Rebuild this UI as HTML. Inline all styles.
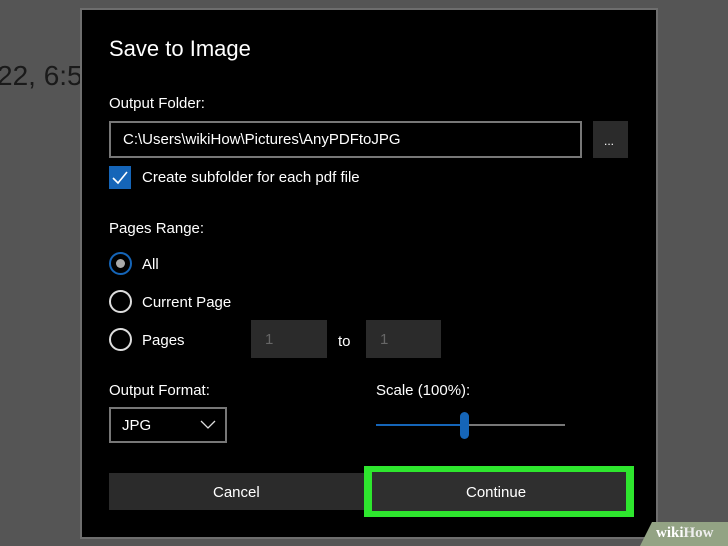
<!DOCTYPE html>
<html><head><style>
*{margin:0;padding:0;box-sizing:border-box}
body{width:728px;height:546px;background:#555;position:relative;overflow:hidden;font-family:"Liberation Sans",sans-serif;color:#fff}
.a{position:absolute}
.t{font-size:15px;color:#fff;white-space:nowrap}
.dlg{left:80px;top:8px;width:578px;height:531px;background:#000;border:2px solid #6e6e6e}
.radio{width:23px;height:23px;border:2px solid #ddd;border-radius:50%}
</style></head><body>
<div class="a" style="left:-3px;top:60px;font-size:28px;color:#1a1a1a">22, 6:5</div>
<div class="a dlg"></div>
<div class="a" style="left:109px;top:36px;font-size:22px">Save to Image</div>
<div class="a t" style="left:109px;top:95px">Output Folder:</div>
<div class="a" style="left:109px;top:121px;width:473px;height:37px;border:2px solid #777"></div>
<div class="a t" style="left:123px;top:131px">C:\Users\wikiHow\Pictures\AnyPDFtoJPG</div>
<div class="a" style="left:593px;top:121px;width:35px;height:37px;background:#2b2b2b"></div>
<div class="a t" style="left:604px;top:134px;font-size:12px">...</div>
<div class="a" style="left:109px;top:166px;width:22px;height:23px;background:#1565b8"><svg width="22" height="23"><path d="M4 12 L9 17 L18 6" stroke="#fff" stroke-width="1.6" fill="none"/></svg></div>
<div class="a t" style="left:142px;top:169px">Create subfolder for each pdf file</div>
<div class="a t" style="left:109px;top:220px">Pages Range:</div>
<div class="a radio" style="left:109px;top:252px;border-color:#1565b8"></div>
<div class="a" style="left:116px;top:259px;width:9px;height:9px;border-radius:50%;background:#aaa"></div>
<div class="a t" style="left:142px;top:256px">All</div>
<div class="a radio" style="left:109px;top:290px"></div>
<div class="a t" style="left:142px;top:294px">Current Page</div>
<div class="a radio" style="left:109px;top:328px"></div>
<div class="a t" style="left:142px;top:332px">Pages</div>
<div class="a" style="left:251px;top:320px;width:76px;height:38px;background:#2b2b2b"></div>
<div class="a t" style="left:265px;top:331px;color:#666">1</div>
<div class="a t" style="left:338px;top:333px">to</div>
<div class="a" style="left:366px;top:320px;width:75px;height:38px;background:#2b2b2b"></div>
<div class="a t" style="left:380px;top:331px;color:#666">1</div>
<div class="a t" style="left:109px;top:382px">Output Format:</div>
<div class="a" style="left:109px;top:407px;width:118px;height:36px;border:2px solid #777"></div>
<div class="a t" style="left:122px;top:417px">JPG</div>
<svg class="a" style="left:200px;top:420px" width="16" height="10"><path d="M1 1 L8 8 L15 1" stroke="#ddd" stroke-width="1.3" fill="none"/></svg>
<div class="a t" style="left:376px;top:382px">Scale (100%):</div>
<div class="a" style="left:376px;top:424px;width:90px;height:2px;background:#1565b8"></div>
<div class="a" style="left:466px;top:424px;width:99px;height:2px;background:#777"></div>
<div class="a" style="left:460px;top:412px;width:9px;height:27px;border-radius:5px;background:#1565b8"></div>
<div class="a" style="left:109px;top:473px;width:256px;height:37px;background:#2b2b2b"></div>
<div class="a t" style="left:213px;top:484px">Cancel</div>
<div class="a" style="left:364px;top:466px;width:270px;height:51px;background:#2ee62e"></div>
<div class="a" style="left:372px;top:472px;width:254px;height:39px;background:#2f2f2f"></div>
<div class="a t" style="left:466px;top:484px">Continue</div>
<div class="a" style="left:640px;top:522px;width:88px;height:24px;background:#93a384;clip-path:polygon(12px 0,100% 0,100% 100%,0 100%)"></div>
<div class="a" style="left:656px;top:525px;font-family:'Liberation Serif',serif;font-weight:bold;font-size:15px;color:#fff">wiki<span style="color:#eee">How</span></div>
</body></html>
